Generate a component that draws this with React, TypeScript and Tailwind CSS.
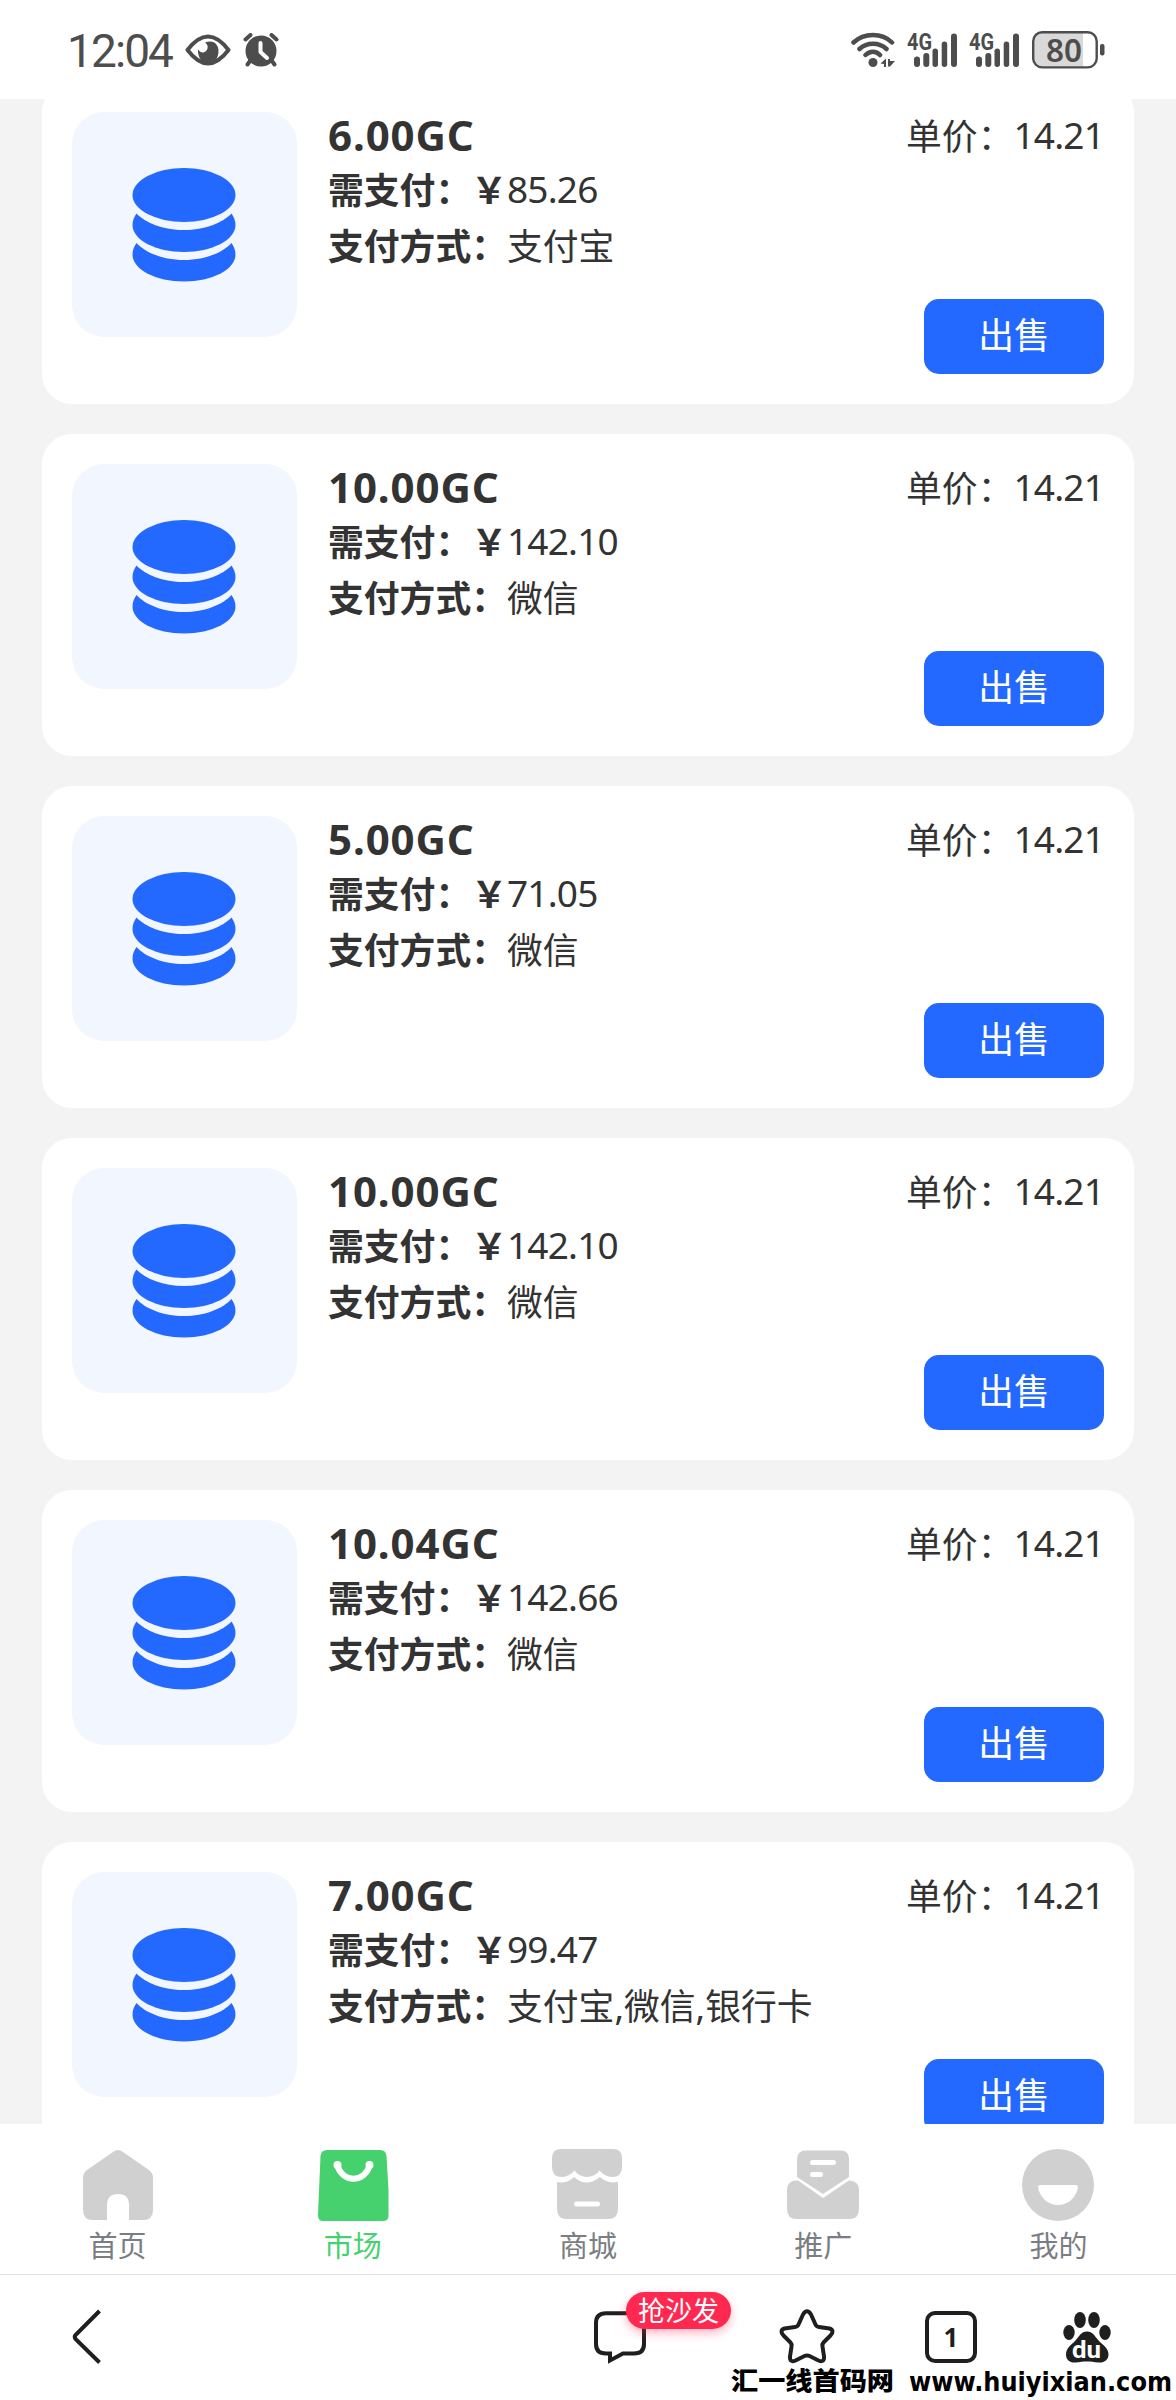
import type { ReactNode } from "react";

type Order = {
  amount: string;
  total: string;
  methods: string;
};

const orders: Order[] = [
  { amount: "6.00", total: "85.26", methods: "支付宝" },
  { amount: "10.00", total: "142.10", methods: "微信" },
  { amount: "5.00", total: "71.05", methods: "微信" },
  { amount: "10.00", total: "142.10", methods: "微信" },
  { amount: "10.04", total: "142.66", methods: "微信" },
  { amount: "7.00", total: "99.47", methods: "支付宝,微信,银行卡" },
];

function CoinsIcon() {
  return (
    <svg className="mr-px" width="104" height="114" viewBox="0 0 104 114" fill="#2469ff">
      <ellipse cx="52" cy="27" rx="51.500" ry="27" />
      <path d="M4.500 45.500C13 54.500 31 62 52 62S91 54.500 99.500 45.500C102 49 103.500 53 103.500 57C103.500 72 80 84 52 84S.5 72 .5 57C.5 53 2 49 4.500 45.500Z" />
      <path d="M4.500 75C13 84.500 31 92 52 92S91 84.500 99.500 75C102 78.500 103.500 82.500 103.500 86.500C103.500 101.500 80 113.500 52 113.500S.5 101.500 .5 86.500C.5 82.500 2 78.500 4.500 75Z" />
    </svg>
  );
}

function SignalIcon() {
  return (
    <svg className="overflow-visible" width="51" height="36" viewBox="0 0 51 36" fill="#4d4d4d">
      <text x="0" y="17.500" fontSize="23" fontWeight="700" fontFamily="Roboto, sans-serif" textLength="25" lengthAdjust="spacingAndGlyphs">
        4G
      </text>
      <rect x="7" y="24.500" width="6" height="10.500" rx="3" />
      <rect x="16.300" y="21" width="6" height="14" rx="3" />
      <rect x="25.500" y="16.500" width="5.500" height="18.500" rx="2.700" />
      <rect x="34.700" y="9.500" width="5.500" height="25.500" rx="2.700" />
      <rect x="44" y="1.500" width="6" height="33.500" rx="3" />
    </svg>
  );
}

function StatusBar() {
  return (
    <header className="flex h-[99px] shrink-0 items-center justify-between bg-white pl-[67px] pr-[71px] text-[#4d4d4d]">
      <div className="flex items-center">
        <span className="w-[118px] whitespace-nowrap pt-[2px] font-[Roboto,sans-serif] text-[46px] leading-none tracking-[-1.900px]">12:04</span>
        <svg width="46" height="32" viewBox="0 0 46 32" fill="none">
          <path d="M2.500 16C9 7.500 15.500 2.500 23 2.500S37 7.500 43.500 16C37 24.500 30.500 29.500 23 29.500S9 24.500 2.500 16Z" stroke="#4d4d4d" strokeWidth="4" strokeLinejoin="round" />
          <path d="M20 8.500C29 5 34 11 33.500 18C33 24.500 30 29 23 29C16.500 29 12.500 23 13 15C14.500 18.500 18 19.500 20.500 17.500C23.500 15 23.500 11 20 8.500Z" fill="#4d4d4d" />
        </svg>
        <svg className="ml-3" width="36" height="34" viewBox="0 0 36 34" fill="none" stroke="#4d4d4d" strokeLinecap="round">
          <circle cx="18" cy="18" r="15.500" fill="#4d4d4d" stroke="none" />
          <path d="M2.500 6.500L7.500 2M33.500 6.500L28.500 2M7 28L4.500 31.500M29 28L31.500 31.500" strokeWidth="4" />
          <path d="M17.500 10V19L24 25" stroke="#fff" strokeWidth="4" strokeLinejoin="round" />
        </svg>
      </div>
      <div className="flex items-center">
        <svg width="44" height="36" viewBox="0 0 44 36" fill="none" stroke="#4d4d4d" strokeWidth="4.500" strokeLinecap="round">
          <path d="M2.500 10.500C13 .5 31 .5 41 10.500M8.500 17C16 10 28 10 35.500 17M14.500 23C19 18.500 25 18.500 29 23" />
          <circle cx="22" cy="30.500" r="4.500" fill="#4d4d4d" stroke="none" />
          <path d="M29.500 31.500L35 26.500V35H33V32ZM44 29L39 34.500H37V27H39V29Z" fill="#4d4d4d" stroke="none" />
        </svg>
        <div className="ml-3 flex gap-[11px]">
          <SignalIcon />
          <SignalIcon />
        </div>
        <svg className="ml-3 overflow-visible" width="73" height="38" viewBox="0 0 73 38">
          <path d="M10 2H51V36H10Q2 36 2 28V10Q2 2 10 2Z" fill="#d9d9d9" />
          <rect x="1.200" y="1.200" width="63.500" height="35.200" rx="9" fill="none" stroke="#4d4d4d" strokeWidth="2.400" />
          <rect x="68" y="13" width="4.500" height="11.500" rx="2" fill="#4d4d4d" />
          <text x="14" y="30.500" fontSize="33" fontWeight="600" fontFamily="Noto Sans, sans-serif" fill="#4d4d4d" textLength="36" lengthAdjust="spacingAndGlyphs">
            80
          </text>
        </svg>
      </div>
    </header>
  );
}

function OrderCard({ order }: { order: Order }) {
  return (
    <article className="flex h-[322px] shrink-0 rounded-[30px] bg-white p-[30px] text-[35.800px] text-[#333]">
      <div className="flex size-[225px] shrink-0 items-center justify-center rounded-[32px] bg-[#f1f6ff]">
        <CoinsIcon />
      </div>
      <div className="ml-[31px] flex-1 whitespace-nowrap">
        <h2 className="text-[42px] font-bold leading-[46px] tracking-[0.900px]">{order.amount}GC</h2>
        <p className="mt-[4px] flex leading-[56px]">
          <b>{"需支付\uFF1A\uFFE5"}</b>
          <span className="text-[37px] leading-[54px] tracking-[-0.800px]">{order.total}</span>
        </p>
        <p className="flex leading-[57px]">
          <b>{"支付方式\uFF1A"}</b>
          <span>{order.methods}</span>
        </p>
      </div>
      <div className="flex flex-col items-end justify-between">
        <p className="flex whitespace-nowrap leading-[48px]">
          {"单价\uFF1A"}
          <span className="text-[37px] leading-[46px] tracking-[-0.800px]">14.21</span>
        </p>
        <button className="h-[75px] w-[180px] rounded-[15px] bg-[#2469ff] pb-[3px] leading-[72px] text-white">出售</button>
      </div>
    </article>
  );
}

function Tab({ label, active, children }: { label: string; active?: boolean; children: ReactNode }) {
  return (
    <a className={`flex flex-1 flex-col items-center pt-[23px] ${active ? "text-[#47d16e]" : "text-[#7a7e83]"}`}>
      <svg width="76" height="76" viewBox="0 0 76 76" fill={active ? "#47d16e" : "#d0d0d0"}>
        {children}
      </svg>
      <span className="text-[29px] leading-[46px]">{label}</span>
    </a>
  );
}

function TabBar() {
  return (
    <nav className="flex h-[151px] shrink-0 border-b border-[#e2e2e2] bg-white">
      <Tab label="首页">
        <path d="M33 5Q38 1 43 5L69 23Q73 26 73 31V63Q73 73 63 73H49V58Q49 47 38 47T27 58V73H13Q3 73 3 63V31Q3 26 7 23Z" />
      </Tab>
      <Tab label="市场" active>
        <path d="M12 3H65Q71 3 71.500 9L73.500 43V69Q73.500 74 68 74H8Q3 74 3 68L5.500 9Q6 3 12 3Z" />
        <path d="M22.500 18.500C27 36 50 36 54.500 18.500" fill="none" stroke="#fff" strokeWidth="6" />
        <circle cx="22.500" cy="18" r="4" fill="#fff" />
        <circle cx="54.500" cy="18" r="4" fill="#fff" />
      </Tab>
      <Tab label="商城">
        <path d="M11 2H63Q72 2 72 11V20Q72 30 62 30Q55 30 49.500 23.500Q45 30 37 30T24.500 23.500Q19 30 12 30Q2 30 2 20V11Q2 2 11 2Z" />
        <path d="M7 35Q18 37 24 30Q36 41 50 30Q57 37 68 35V62Q68 72 58 72H17Q7 72 7 62Z" />
        <rect x="24" y="54.500" width="26" height="5" rx="2.500" fill="#fff" />
      </Tab>
      <Tab label="推广">
        <path d="M21 3.500H56Q64 3.500 64 12V30L38 47L12 30V12Q12 3.500 21 3.500Z" />
        <path d="M13 33.500L38 51L64 33.500Q74 34 74 43V62Q74 72 64 72H12Q2 72 2 62V43Q2 34 11 33.500Z" />
        <rect x="25" y="13" width="26" height="5" rx="2.500" fill="#fff" />
        <rect x="25" y="25" width="13" height="5" rx="2.500" fill="#fff" />
      </Tab>
      <Tab label="我的">
        <circle cx="38" cy="38" r="36" />
        <path d="M20.500 38H55.500Q58 38 58 40C56.500 50 48.500 58 38 58S19.500 50 18 40Q18 38 20.500 38Z" fill="#fff" />
      </Tab>
    </nav>
  );
}

function BrowserBar() {
  return (
    <footer className="relative flex h-[125px] shrink-0 items-start bg-white pl-[71px] pr-[65px] pt-[34px]">
      <svg width="32" height="56" viewBox="0 0 32 56" fill="none" stroke="#1f1f1f" strokeWidth="4">
        <path d="M28.500 2L4.500 26Q3 28 4.500 30L28.500 53.500" />
      </svg>
      <div className="relative ml-[490px]">
        <svg width="54" height="56" viewBox="0 0 54 56" fill="none" stroke="#1f1f1f" strokeWidth="4">
          <path d="M13 4.200H41Q51 4.200 51 14V35Q51 44.500 41 44.500H30L17 51.500V44.500H13Q3 44.500 3 35V14Q3 4.200 13 4.200Z" />
        </svg>
        <span className="absolute left-[33px] top-[-17px] flex h-[37px] w-[105px] items-center justify-center rounded-full bg-[#ff2850] text-[27px] leading-none text-white shadow-[0_4px_10px_rgba(255,40,80,0.35)]">
          抢沙发
        </span>
      </div>
      <svg className="ml-[132px]" width="56" height="56" viewBox="0 0 56 56" fill="none" stroke="#1f1f1f" strokeWidth="4" strokeLinejoin="round">
        <path d="M24 5.500Q28 -1 32 5.500L36.500 15.500Q37.500 17.800 40 18L50.500 19.500Q56 21.500 51.500 26.500L44.500 33.500Q43 35 43.500 37.500L45 47.500Q45.500 54 39.500 51.500L30.500 47Q28 45.800 25.500 47L16.500 51.500Q10.500 54 11 47.500L12.500 37.500Q13 35 11.500 33.500L4.500 26.500Q0 21.500 5.500 19.500L16 18Q18.500 17.800 19.500 15.500Z" />
      </svg>
      <div className="ml-[90px] mt-[2px] flex h-[52px] w-[52px] items-center justify-center rounded-[10px] border-4 border-[#1f1f1f] font-['Noto_Sans'] text-[26px] font-bold leading-none text-[#1f1f1f]">
        1
      </div>
      <svg className="ml-auto" width="48" height="56" viewBox="0 0 48 56" fill="#1f1f1f">
        <ellipse cx="17" cy="11" rx="5.800" ry="8" />
        <ellipse cx="31" cy="11" rx="5.800" ry="8" />
        <ellipse cx="6" cy="23.500" rx="5.700" ry="7.500" />
        <ellipse cx="42" cy="23.500" rx="5.700" ry="7.500" />
        <path d="M24 22.500C30 22.500 31.500 27 35.500 31.500C40 36 45.500 39 45.500 45.500C45.500 51 41 54 35.500 53.500C31 53 28 52.500 24 52.500S17 53 12.500 53.500C7 54 3 51 3 45.500C3 39 8 36 12.500 31.500C16.500 27 18 22.500 24 22.500Z" />
        <text x="9" y="49" fontSize="24" fontWeight="700" fontFamily="Roboto, sans-serif" fill="#fff" textLength="29" lengthAdjust="spacingAndGlyphs">
          du
        </text>
      </svg>
      <div className="absolute bottom-[3px] right-[3px] flex h-[30px] items-center gap-[14px] whitespace-nowrap">
        <svg className="overflow-visible" width="164" height="30" viewBox="0 0 164 30">
          <text x="0" y="23" fontSize="25" fontWeight="900" fontFamily="Noto Sans CJK SC, sans-serif" textLength="163" lengthAdjust="spacingAndGlyphs">
            汇一线首码网
          </text>
        </svg>
        <svg className="overflow-visible" width="264" height="30" viewBox="0 0 264 30">
          <text x="0" y="24" fontSize="26" fontWeight="700" fontFamily="DejaVu Sans, sans-serif" textLength="263" lengthAdjust="spacingAndGlyphs">
            www.huiyixian.com
          </text>
        </svg>
      </div>
    </footer>
  );
}

export default function App() {
  return (
    <div className="flex h-[2400px] w-[1176px] flex-col overflow-hidden bg-[#f3f3f3] font-['Noto_Sans','Noto_Sans_CJK_SC',sans-serif]">
      <StatusBar />
      <main className="min-h-0 flex-1 overflow-hidden px-[42px]">
        <div className="-mt-[17px] flex flex-col gap-[30px]">
          {orders.map((order, i) => (
            <OrderCard key={i} order={order} />
          ))}
        </div>
      </main>
      <TabBar />
      <BrowserBar />
    </div>
  );
}
